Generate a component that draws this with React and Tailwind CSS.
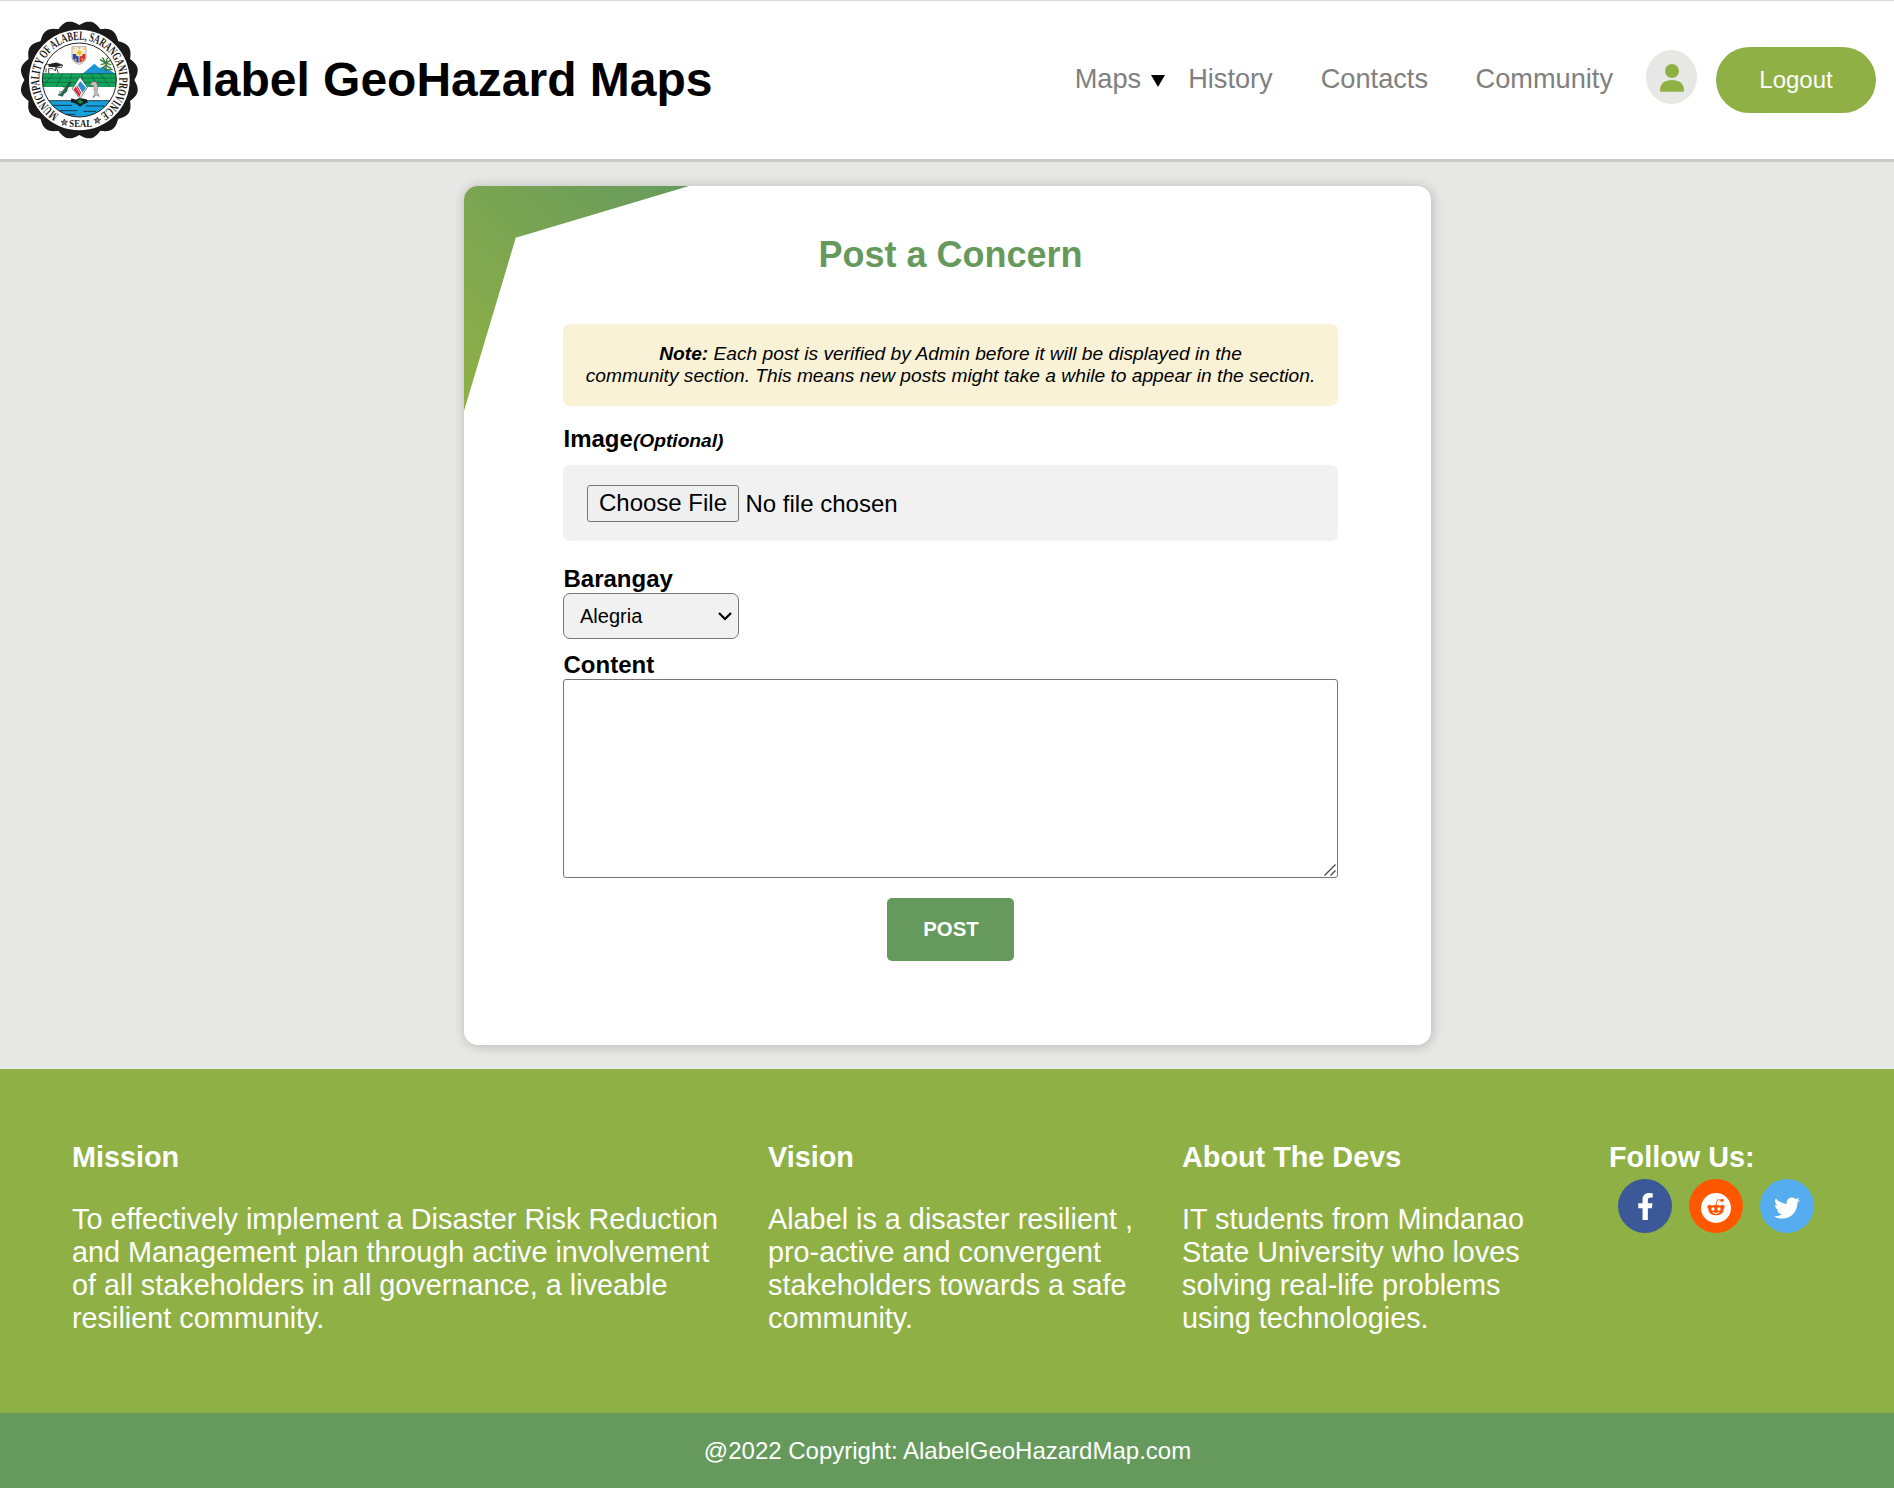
import React from "react";
import { FaFacebookF, FaTwitter } from "react-icons/fa";

const scallop = (() => {
  const points = [];
  for (let i = 0; i < 384; i++) {
    const a = (i / 384) * Math.PI * 2;
    const r = 165 + 13 * Math.pow(Math.abs(Math.sin(8 * a)), 1.1);
    points.push(`${(238 + r * Math.cos(a)).toFixed(1)},${(242 + r * Math.sin(a)).toFixed(1)}`);
  }
  return points.join(" ");
})();

function Star({ x, y }) {
  return (
    <path
      transform={`translate(${x} ${y})`}
      d="M0-10 3-3 10-3 4 2 6 9 0 5-6 9-4 2-10-3-3-3Z"
      fill="#8d7f80"
      stroke="#231f20"
      strokeWidth="2"
    />
  );
}

function Seal() {
  return (
    <svg viewBox="60 62 356 360" className="h-[120px] w-[118.7px]">
      <defs>
        <clipPath id="scene">
          <circle cx="238" cy="242" r="111" />
        </clipPath>
        <path id="ring" d="M177 345A120 120 0 1 1 299 345" />
      </defs>
      <polygon points={scallop} fill="#1b191a" />
      <circle cx="238" cy="242" r="151" fill="#fff" />
      <g clipPath="url(#scene)">
        <path d="M244 226 283 193 298 206 312 203 352 226Z" fill="#1b95d3" />
        <rect x="120" y="223" width="236" height="40" fill="#13a45c" />
        <path
          d="M120 236H356M120 249H356M160 223 128 263M188 223 168 263M215 223 206 263M245 223 250 263M273 223 292 263M300 223 330 263"
          stroke="#0b6136"
          strokeWidth="2"
        />
        <path d="M120 223H356" stroke="#174b32" strokeWidth="2" />
        <rect x="120" y="304" width="236" height="60" fill="#18a0dc" />
        <path
          d="M120 304H356M160 318H216M180 334H232M258 320H312M250 336H288M196 345H226"
          stroke="#123"
          strokeWidth="2.5"
        />
      </g>
      <path d="M212 308 214 297 228 301 238 296 260 300 264 309 248 316 240 322 229 313Z" fill="#16211b" />
      <path d="M231 305 240 300 250 308 240 315Z" fill="#128545" />
      <path d="M240 232 262 264 240 298 217 268Z" fill="#fff" stroke="#333" strokeWidth="2" />
      <path d="M221 270 231 258 244 281 238 292Z" fill="#d92332" />
      <path d="M233 256 241 246 258 265 248 280Z" fill="#2b8fce" />
      <path d="M228 261 242 286" stroke="#fff" strokeWidth="2" />
      <path d="M212 249Q200 252 200 263 190 268 186 280L174 287 188 291 191 283Q203 278 203 266 211 262 212 249Z" fill="#1d7447" stroke="#17251e" strokeWidth="1.5" />
      <path d="M188 276 177 279M199 265 188 262" stroke="#17251e" strokeWidth="2" />
      <path d="M276 247 289 248Q296 260 291 278L298 291 288 287 279 296 284 282Q286 266 279 258L270 257Z" fill="#c9c2c0" stroke="#675d5d" strokeWidth="1.5" />
      <path d="M291 253 297 246 296 262M284 268 278 273" stroke="#675d5d" strokeWidth="1.5" fill="none" />
      <path d="M132 208Q134 190 148 196L170 191 188 197 184 205 168 203 166 215 159 208H146V222M138 207V220M169 205 175 221" fill="none" stroke="#222" strokeWidth="2.5" />
      <path d="M146 195 168 190 188 198 166 204 145 202Z" fill="#222" />
      <path d="M317 216 319 190" stroke="#5b5a2c" strokeWidth="4" />
      <path
        d="M318 192 300 180M318 192 307 174M318 192 322 175M318 192 332 182M318 192 334 196M318 192 302 196M318 198 306 206M318 198 334 208M312 211H338"
        stroke="#3b7d3a"
        strokeWidth="4"
      />
      <path d="M216 142H258V176Q256 190 238 195 218 190 216 176Z" fill="#f4efe6" stroke="#9a8c8a" strokeWidth="2" />
      <path d="M218 164H236V190Q222 187 218 176Z" fill="#2a4ea4" />
      <path d="M238 164H256V176Q252 187 238 190Z" fill="#d5303a" />
      <circle cx="238" cy="160" r="11" fill="#fff4c4" />
      <circle cx="238" cy="160" r="6" fill="#efb72c" />
      <path d="M238 146V174M224 160H252M228 150 248 170M248 150 228 170" stroke="#efb72c" strokeWidth="1.5" />
      <g fill="#efb72c">
        <circle cx="222" cy="148" r="2.5" />
        <circle cx="238" cy="145" r="2.5" />
        <circle cx="253" cy="148" r="2.5" />
        <circle cx="227" cy="181" r="3" />
        <circle cx="247" cy="180" r="3" />
      </g>
      <circle cx="238" cy="242" r="111" fill="none" stroke="#231f20" strokeWidth="3" />
      <text fontFamily="Liberation Serif, serif" fontWeight="700" fontSize="38" fill="#1b191a">
        <textPath href="#ring" textLength="624" lengthAdjust="spacingAndGlyphs">
          MUNICIPALITY OF ALABEL, SARANGANI PROVINCE
        </textPath>
      </text>
      <text x="208" y="382" textLength="68" lengthAdjust="spacingAndGlyphs" fontFamily="Liberation Serif, serif" fontWeight="700" fontSize="34" fill="#1b191a">
        SEAL
      </text>
      <Star x={193} y={369} />
      <Star x={292} y={363} />
    </svg>
  );
}

function RedditFace() {
  return (
    <svg viewBox="0 0 90 90" className="mt-[3px] size-[30px]">
      <circle cx="45" cy="45" r="45" fill="#fff" />
      <g fill="#ff5700">
        <circle cx="26" cy="42" r="7" />
        <circle cx="64" cy="42" r="7" />
        <ellipse cx="45" cy="51" rx="23" ry="16" />
        <circle cx="63" cy="22" r="5" />
      </g>
      <path d="M45 36 49 20 61 22" fill="none" stroke="#ff5700" strokeWidth="2.5" />
      <circle cx="36" cy="48" r="5" fill="#fff" />
      <circle cx="54" cy="48" r="5" fill="#fff" />
      <path d="M35 58Q45 65 55 58" fill="none" stroke="#fff" strokeWidth="3" />
    </svg>
  );
}

function Header() {
  return (
    <header className="flex h-[162px] items-center border-t border-b-[3px] border-t-[#dadada] border-b-[#cbcbc9] bg-white pr-[18px] pl-5">
      <Seal />
      <h1 className="ml-[27px] pb-[2px] text-[48px] leading-[55px] font-bold whitespace-nowrap">Alabel GeoHazard Maps</h1>
      <nav className="ml-auto flex items-center pb-[3px] text-[27.2px] leading-8 text-[#808080]">
        <a>Maps</a>
        <svg viewBox="0 0 14 12" className="mt-1 ml-[10px] h-3 w-[14px] fill-black">
          <path d="M0 0H14L7 12Z" />
        </svg>
        <a className="ml-[23px]">History</a>
        <a className="ml-[48px]">Contacts</a>
        <a className="ml-[47.500px]">Community</a>
      </nav>
      <div className="mb-[6px] ml-[33px] flex h-[54px] w-[51px] items-center justify-center rounded-[50%] bg-[#e7e7e5]">
        <svg viewBox="0 0 24 28" className="mt-px h-7 w-6 fill-[#8fb045]">
          <circle cx="12" cy="7" r="7" />
          <path d="M0 26.200C0 19.500 5 16 12 16S24 19.500 24 26.200Q24 27.800 22.500 27.800H1.500Q0 27.800 0 26.200Z" />
        </svg>
      </div>
      <button className="ml-[19px] h-[66px] w-40 rounded-[33px] bg-[#8fb045] text-2xl text-white">Logout</button>
    </header>
  );
}

function ConcernForm() {
  return (
    <section className="relative my-6 ml-[464px] h-[859px] w-[967px] rounded-[14px] bg-white pt-12 pl-[99px] shadow-[1px_1px_12px_rgba(0,0,0,0.22)]">
      <div className="absolute top-0 left-0 h-[225px] w-[225px] rounded-tl-[14px] bg-linear-[45deg,#8fb045,#669a5d] [clip-path:polygon(0_0,100%_0,23%_23%,0_100%)]" />
      <div className="flex w-[775px] flex-col items-start">
        <h2 className="self-center text-4xl leading-[41px] font-bold text-[#669a5d]">Post a Concern</h2>
        <p className="mt-[49px] h-[82px] w-full rounded-[7px] bg-[#faf2d6] pt-[19px] text-center text-[19.2px] leading-[22px] whitespace-nowrap italic">
          <b>Note:</b> Each post is verified by Admin before it will be displayed in the
          <br />
          community section. This means new posts might take a while to appear in the section.
        </p>
        <label className="mt-[19px] h-7 pl-[0.5px] text-2xl leading-7 font-bold">
          Image<i className="text-[19.2px] leading-none">(Optional)</i>
        </label>
        <div className="mt-3 flex h-[76px] w-full items-center rounded-[7px] bg-[#f1f1f1] pt-[2px] pl-6 text-2xl leading-7">
          <button className="mb-px h-[37px] w-[152px] rounded-[3px] border border-[#767676] bg-[#efefef] pb-[2px] leading-7">
            Choose File
          </button>
          <span className="ml-[6.500px]">No file chosen</span>
        </div>
        <label className="mt-[23px] pl-[0.5px] text-2xl leading-[29px] font-bold">Barangay</label>
        <div className="relative">
          <select className="block h-[46px] w-44 appearance-none rounded-[7px] border border-[#767676] bg-[#f1f1f1] pl-4 text-xl leading-[23px]">
            <option>Alegria</option>
          </select>
          <svg viewBox="0 0 14 9" className="pointer-events-none absolute top-[19px] right-[7px] h-[9px] w-[14px]">
            <path d="M1 1 7 7 13 1" fill="none" stroke="#000" strokeWidth="2.2" />
          </svg>
        </div>
        <label className="mt-[11px] pl-[0.5px] text-2xl leading-[29px] font-bold">Content</label>
        <div className="relative h-[199px] w-full">
          <textarea className="block size-full resize-none rounded-[3px] border border-[#767676] bg-white" />
          <svg viewBox="0 0 12 12" className="pointer-events-none absolute right-[2px] bottom-[2px] size-3">
            <path d="M.5 11.500 11.500.5M6.500 11.500 11.500 6.500" stroke="#4a4a4a" strokeWidth="1.400" />
          </svg>
        </div>
        <button className="mt-5 h-[63px] w-[127px] self-center rounded-[5px] bg-[#669a5d] pb-px pl-[7px] text-[20.4px] font-bold text-white">
          <span className="mr-[6px]">POST</span>
        </button>
      </div>
    </section>
  );
}

function Column({ title, lines }) {
  return (
    <div>
      <h3 className="font-bold">{title}</h3>
      <p className="mt-[29px]">
        {lines.map((line) => (
          <span key={line} className="block">
            {line}
          </span>
        ))}
      </p>
    </div>
  );
}

function Footer() {
  return (
    <footer className="text-white">
      <div className="grid h-[344px] grid-cols-[696px_414px_427px_1fr] bg-[#8fb045] pt-[72px] pl-[72px] text-[28.8px] leading-[33px] whitespace-nowrap">
        <Column
          title="Mission"
          lines={[
            "To effectively implement a Disaster Risk Reduction",
            "and Management plan through active involvement",
            "of all stakeholders in all governance, a liveable",
            "resilient community.",
          ]}
        />
        <Column
          title="Vision"
          lines={[
            "Alabel is a disaster resilient ,",
            "pro-active and convergent",
            "stakeholders towards a safe",
            "community.",
          ]}
        />
        <Column
          title="About The Devs"
          lines={[
            "IT students from Mindanao",
            "State University who loves",
            "solving real-life problems",
            "using technologies.",
          ]}
        />
        <div>
          <h3 className="font-bold">Follow Us:</h3>
          <div className="mt-[5px] ml-[9px] flex gap-[17px]">
            <a className="flex size-[54px] items-center justify-center rounded-full bg-[#3b5998]">
              <FaFacebookF className="size-[27px]" />
            </a>
            <a className="flex size-[54px] items-center justify-center rounded-full bg-[#ff5700]">
              <RedditFace />
            </a>
            <a className="flex size-[54px] items-center justify-center rounded-full bg-[#55acee]">
              <FaTwitter className="mt-[3px] size-[26px]" />
            </a>
          </div>
        </div>
      </div>
      <div className="h-[75px] bg-[#669a5d] pt-6 pl-px text-center text-2xl leading-7">
        @2022 Copyright: AlabelGeoHazardMap.com
      </div>
    </footer>
  );
}

export default function App() {
  return (
    <div className="flow-root min-h-screen bg-[#e7e7e5] font-['Liberation_Sans',Arial,sans-serif] text-black">
      <Header />
      <ConcernForm />
      <Footer />
    </div>
  );
}
